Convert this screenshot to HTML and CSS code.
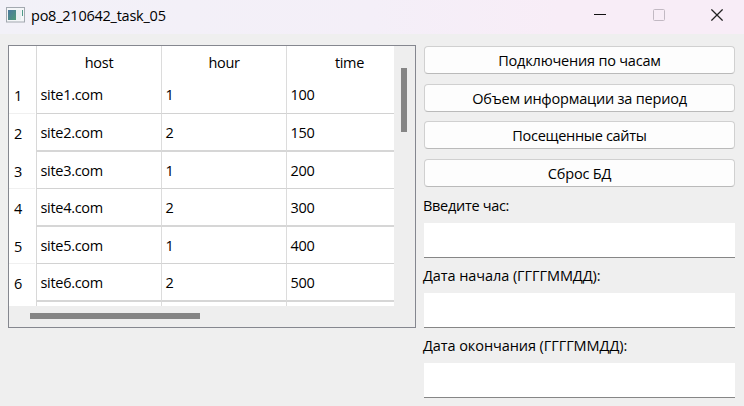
FILE: index.html
```html
<!DOCTYPE html>
<html lang="ru">
<head>
<meta charset="utf-8">
<title>po8_210642_task_05</title>
<link rel="stylesheet" href="styles.css">
</head>
<body>
<header class="titlebar">
  <svg class="app-icon" width="19" height="16" viewBox="0 0 19 16">
    <defs><linearGradient id="g" x1="0" y1="0" x2="1" y2="1"><stop offset="0" stop-color="#4a78a0"/><stop offset="1" stop-color="#4f9a78"/></linearGradient></defs>
    <rect x=".5" y=".5" width="18" height="14.500" fill="#f4f6f8" stroke="#a3a9b0"/>
    <rect x="2" y="3" width="8" height="10" fill="url(#g)"/>
    <rect x="10" y="3" width="5" height="10" fill="#e9eff1"/>
    <rect x="16" y="3" width="1" height="6" fill="#4f9a88"/>
  </svg>
  <h1 class="title">po8_210642_task_05</h1>
  <div class="controls">
    <svg width="12" height="12" viewBox="0 0 12 12"><path d="M0 5.500H12" stroke="#111" stroke-width="1"/></svg>
    <svg width="12" height="12" viewBox="0 0 12 12"><rect x=".5" y=".5" width="11" height="11" rx="1" fill="none" stroke="#c2b9c3"/></svg>
    <svg width="12" height="12" viewBox="0 0 12 12"><path d="M.4.4 11.600 11.600M11.600.4.4 11.600" stroke="#222" stroke-width="1.250"/></svg>
  </div>
</header>
<main class="content">
  <section class="table-view">
    <div class="grid">
      <div class="num head"></div><div class="cell head">host</div><div class="cell head">hour</div><div class="cell head last">time</div>
      <div class="num line">1</div><div class="cell">site1.com</div><div class="cell">1</div><div class="cell last">100</div>
      <div class="num">2</div><div class="cell thick">site2.com</div><div class="cell thick">2</div><div class="cell thick last">150</div>
      <div class="num line">3</div><div class="cell">site3.com</div><div class="cell">1</div><div class="cell last">200</div>
      <div class="num">4</div><div class="cell thick">site4.com</div><div class="cell thick">2</div><div class="cell thick last">300</div>
      <div class="num line">5</div><div class="cell">site5.com</div><div class="cell">1</div><div class="cell last">400</div>
      <div class="num">6</div><div class="cell thick">site6.com</div><div class="cell thick">2</div><div class="cell thick last">500</div>
      <div class="num"></div><div class="cell end"></div><div class="cell end"></div><div class="cell end last"></div>
    </div>
    <div class="vscroll"><div class="vthumb"></div></div>
    <div class="hscroll"><div class="hthumb"></div></div>
  </section>
  <section class="side">
    <button class="btn">Подключения по часам</button>
    <button class="btn second">Объем информации за период</button>
    <button class="btn third">Посещенные сайты</button>
    <button class="btn second">Сброс БД</button>
    <label class="label" for="hour">Введите час:</label>
    <input class="field" id="hour">
    <label class="label" for="start">Дата начала (ГГГГММДД):</label>
    <input class="field" id="start">
    <label class="label" for="finish">Дата окончания (ГГГГММДД):</label>
    <input class="field" id="finish">
  </section>
</main>
</body>
</html>
```
FILE: styles.css
```css
* { box-sizing: border-box; }
body {
  margin: 0;
  width: 744px;
  height: 406px;
  overflow: hidden;
  background: #efefef;
  color: #000;
  font: 14.5px/20px "Open Sans", "Noto Sans", sans-serif;
  letter-spacing: -0.3px;
}
.titlebar {
  display: flex;
  align-items: center;
  height: 34px;
  padding: 0 21px 4px 6px;
  background: linear-gradient(90deg, #f2f1f8, #f4eff8 50%, #f8edf7 75%);
}
.app-icon { margin-top: -1px; }
.title { margin: 2px 0 0 6px; font-size: 14.5px; font-weight: 400; letter-spacing: -0.24px; }
.controls { display: flex; gap: 46px; margin: 0 0 0 auto; }
.controls svg:first-child { margin-left: -1px; margin-right: 1px; }
.content { display: flex; gap: 8px; padding: 11px 9px 0 8px; }
.table-view {
  display: grid;
  grid-template: 260px 21px / 385px 21px;
  width: 408px;
  height: 283px;
  border: 1px solid #85878f;
}
.grid {
  display: grid;
  grid-template-columns: 27px 125px 125px 108px;
  grid-template-rows: 30px 38px 38px 37px 38px 37px 38px 4px;
  overflow: hidden;
  background: #fff;
}
.num { padding: 10px 0 0 5px; height: 100%; }
.num.line { width: 26px; border-bottom: 1px solid #f0f0f0; }
.cell {
  padding: 9px 0 0 4px;
  border-left: 1px solid #d8d8d8;
  border-bottom: 1px solid #d2d2d2;
}
.cell + .cell { border-left-color: #dcdcdc; }
.cell.thick { border-bottom: 2px solid #d6d6d6; }
.cell:not(.head) { text-indent: -0.5px; }
.cell.head { padding: 7px 0 0; border-bottom: 0; text-align: center; }
.cell.head.last { padding-left: 18px; }
.cell.end, .num.head { padding: 0; border-bottom: 0; }
.vscroll { padding: 22px 0 0 7px; background: #eee; }
.vthumb { width: 6px; height: 64px; background: #858585; }
.hscroll { grid-column: 1 / 3; padding: 7px 0 0 21px; background: #eee; }
.hthumb { width: 170px; height: 6px; background: #858585; }
.side { display: flex; flex-direction: column; width: 311px; padding-top: 1px; }
.btn {
  height: 28px;
  flex: none;
  padding: 1px 0 0;
  border: 1px solid #d0d0d0;
  border-bottom-color: #bababa;
  border-radius: 4px;
  background: #fdfdfd;
  color: #000;
  font: inherit;
  letter-spacing: -0.2px;
}
.btn.second { margin-top: 10px; }
.btn.third { margin-top: 9px; letter-spacing: -0.3px; }
.label { height: 35px; padding-top: 9px; margin: 0 0 1px -1px; }
.field + .label { height: 34px; padding-top: 8px; letter-spacing: -0.08px; }
.field {
  height: 35px;
  padding: 0 6px;
  border: 0;
  border-bottom: 1px solid #868686;
  border-radius: 0;
  background: #fff;
  font: inherit;
}
```
